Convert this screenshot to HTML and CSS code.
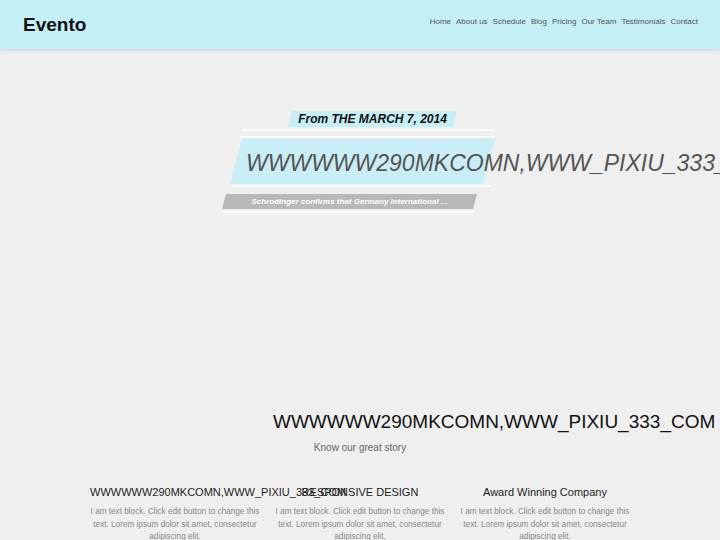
FILE: index.html
```html
<!DOCTYPE html>
<html lang="en">
<head>
<meta charset="utf-8">
<title>Evento</title>
<link rel="stylesheet" href="styles.css">
</head>
<body>
<header class="site-header">
  <div class="logo">Evento</div>
  <nav class="nav">
    <a href="#">Home</a>
    <a href="#">About us</a>
    <a href="#">Schedule</a>
    <a href="#">Blog</a>
    <a href="#">Pricing</a>
    <a href="#">Our Team</a>
    <a href="#">Testimonials</a>
    <a href="#">Contact</a>
  </nav>
</header>

<section class="hero">
  <div class="stack">
    <div class="date"><span>From THE MARCH 7, 2014</span></div>
    <div class="line line-1"></div>
    <div class="line line-2"></div>
    <div class="band"><span class="band-text">WWWWWW290MKCOMN,WWW_PIXIU_333_COM</span></div>
    <div class="line line-3"></div>
    <div class="sub"><span>Schrodinger confirms that Germany international ...</span></div>
    <div class="line line-4"></div>
  </div>
</section>

<section class="about">
  <h2 class="about-title">WWWWWW290MKCOMN,WWW_PIXIU_333_COM</h2>
  <p class="about-sub">Know our great story</p>
  <div class="features">
    <div class="feature">
      <h3>WWWWWW290MKCOMN,WWW_PIXIU_333_COM</h3>
      <p>I am text block. Click edit button to change this text. Lorem ipsum dolor sit amet, consectetur adipiscing elit.</p>
    </div>
    <div class="feature">
      <h3>RESPONSIVE DESIGN</h3>
      <p>I am text block. Click edit button to change this text. Lorem ipsum dolor sit amet, consectetur adipiscing elit.</p>
    </div>
    <div class="feature">
      <h3>Award Winning Company</h3>
      <p>I am text block. Click edit button to change this text. Lorem ipsum dolor sit amet, consectetur adipiscing elit.</p>
    </div>
  </div>
</section>
</body>
</html>
```

FILE: styles.css
```css
html {
  overflow: hidden;
}
body {
  margin: 0;
  background: #efefef;
  font-family: "Liberation Sans", Arial, sans-serif;
  color: #333;
}

.site-header {
  display: flex;
  justify-content: space-between;
  align-items: flex-start;
  height: 49px;
  padding: 0 22px 0 23px;
  background: #c4eff6;
  box-shadow: 0 1px 3px rgba(0, 0, 0, 0.12);
  position: relative;
}
.logo {
  margin-top: 14px;
  font-size: 19px;
  line-height: 22px;
  font-weight: bold;
  color: #111;
}
.nav {
  display: flex;
  gap: 5px;
  margin-top: 17px;
  font-size: 8px;
  line-height: 10px;
}
.nav a {
  color: #555;
  text-decoration: none;
}

.hero {
  height: 362px;
  padding-top: 62px;
  box-sizing: border-box;
}
.stack {
  width: 252px;
  margin-left: 242px;
}
.date {
  margin-left: 48px;
  width: 165px;
  height: 16px;
  position: relative;
  text-align: center;
  font-size: 12px;
  line-height: 16px;
  font-weight: bold;
  font-style: italic;
  color: #111;
}
.date::before,
.band::before,
.sub::before {
  content: "";
  position: absolute;
  inset: 0;
  transform: skewX(-15deg);
  z-index: -1;
}
.date::before {
  background: #c6eef5;
}
.date span,
.sub span {
  position: relative;
}
.line {
  height: 2px;
  background: #fff;
}
.line-1 {
  margin-top: 2px;
  margin-left: 1px;
  width: 251px;
}
.line-2 {
  margin-top: 5px;
  margin-left: -2px;
  width: 254px;
}
.band {
  position: relative;
  z-index: 0;
  margin-left: -6px;
  width: 253px;
  height: 46px;
  padding: 12px 0 0 10px;
  box-sizing: border-box;
  white-space: nowrap;
}
.band::before {
  background: #c9eef5;
}
.band-text {
  font-size: 23px;
  line-height: 26px;
  font-style: italic;
  color: #555;
}
.line-3 {
  margin-top: 1px;
  margin-left: -10px;
  width: 258px;
}
.sub {
  position: relative;
  z-index: 0;
  margin-top: 7px;
  margin-left: -18px;
  width: 251px;
  height: 15px;
  text-align: center;
  font-size: 8px;
  line-height: 16px;
  font-weight: bold;
  font-style: italic;
  color: #fff;
  white-space: nowrap;
}
.sub::before {
  background: #b8b8b8;
}
.line-4 {
  margin-top: 2px;
  margin-left: -20px;
  width: 252px;
}

.about-title {
  margin: 0;
  padding-left: 273px;
  font-size: 19px;
  line-height: 22px;
  font-weight: normal;
  color: #111;
  white-space: nowrap;
}
.about-sub {
  margin: 9px 0 0;
  text-align: center;
  font-size: 10px;
  line-height: 12px;
  color: #666;
}
.features {
  display: grid;
  grid-template-columns: repeat(3, 185px);
  width: 555px;
  margin: 32px auto 0;
}
.feature {
  padding: 0 7.5px;
  text-align: center;
}
.feature h3 {
  margin: 0;
  font-size: 11px;
  line-height: 13px;
  font-weight: normal;
  color: #222;
  white-space: nowrap;
}
.feature p {
  margin: 7px 0 0;
  font-size: 8.2px;
  line-height: 12.6px;
  color: #888;
}
```
